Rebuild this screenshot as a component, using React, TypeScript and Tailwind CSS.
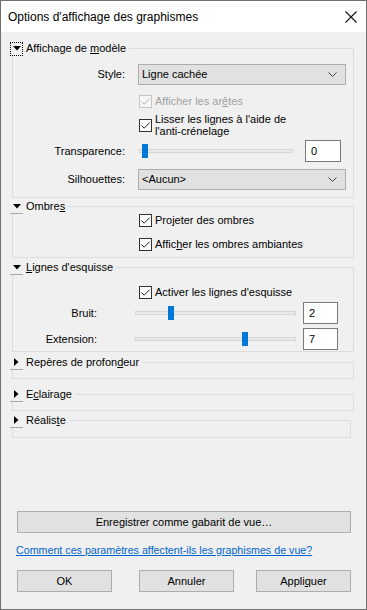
import type { ReactNode } from "react";

function Checkbox({ disabled }: { disabled?: boolean }) {
  return (
    <span
      className={
        disabled
          ? "flex h-[13px] w-[13px] shrink-0 items-center justify-center border border-[#c5c5c5] bg-[#f6f6f6]"
          : "flex h-[13px] w-[13px] shrink-0 items-center justify-center border border-[#333333] bg-white"
      }
    >
      <svg width="11" height="11" viewBox="0 0 11 11">
        <path
          d="M1.5 5.5 L4.2 8.2 L9.6 2.6"
          fill="none"
          stroke={disabled ? "#b4b4b4" : "#222222"}
          strokeWidth="1"
        />
      </svg>
    </span>
  );
}

function CheckRow({
  children,
  disabled,
  className,
}: {
  children: ReactNode;
  disabled?: boolean;
  className?: string;
}) {
  return (
    <div className={"flex items-center gap-[3px] pl-[126px] " + (className ?? "")}>
      <Checkbox disabled={disabled} />
      <span className={disabled ? "leading-[13px] text-[#a0a0a0]" : "leading-[13px]"}>{children}</span>
    </div>
  );
}

function Select({ value }: { value: string }) {
  return (
    <div className="flex h-[21px] w-[208px] items-center justify-between border border-[#adadad] bg-[#e1e1e1] pl-[3px] pr-[8px]">
      <span>{value}</span>
      <svg width="9" height="5" viewBox="0 0 9 5">
        <path d="M0.5 0.5 L4.5 4.5 L8.5 0.5" fill="none" stroke="#404040" strokeWidth="1" />
      </svg>
    </div>
  );
}

function Slider({ width, pos }: { width: number; pos: number }) {
  // pos: 0..1
  const left = 3 + pos * (width - 12);
  return (
    <div className="relative h-[22px] shrink-0" style={{ width }}>
      <div className="absolute left-0 right-0 top-[9px] h-[4px] border border-[#d6d6d6] bg-[#e7eaea]" />
      <div className="absolute top-[4px] h-[14px] w-[6px] bg-[#0078d7]" style={{ left }} />
    </div>
  );
}

function NumBox({ value, w }: { value: string; w: string }) {
  return (
    <div className={"flex h-[22px] items-center border border-[#7a7a7a] bg-white pl-[5px] " + w}>
      {value}
    </div>
  );
}

function Toggle({ open, focus }: { open: boolean; focus?: boolean }) {
  return (
    <div
      className={
        focus
          ? "flex h-[14px] w-[13px] items-center justify-center border border-dotted border-black"
          : "flex h-[14px] w-[13px] items-center justify-center border-b border-[#a8a8a8]"
      }
    >
      {open ? (
        <svg width="8" height="5" viewBox="0 0 8 5">
          <polygon points="0,0 8,0 4,4.5" fill="#000" />
        </svg>
      ) : (
        <svg width="5" height="8" viewBox="0 0 5 8">
          <polygon points="0,0 4.5,4 0,8" fill="#000" />
        </svg>
      )}
    </div>
  );
}

function Group({
  title,
  open,
  focus,
  className,
  children,
}: {
  title: ReactNode;
  open: boolean;
  focus?: boolean;
  className: string;
  children?: ReactNode;
}) {
  return (
    <div className={"ml-[11px] border border-[#dcdcdc] " + className}>
      <div className="-ml-[3px] -mt-[8px] flex h-[15px] w-fit items-center gap-[3px] bg-[#f0f0f0] pr-[3px]">
        <Toggle open={open} focus={focus} />
        <span className="leading-[15px]">{title}</span>
      </div>
      {children}
    </div>
  );
}

export default function App() {
  return (
    <div className="flex h-[610px] w-[367px] flex-col border border-[#6e6e6e] bg-[#f0f0f0] font-['Liberation_Sans',Arial,sans-serif] text-[11px] text-black">
      {/* Title bar */}
      <div className="flex h-[31px] shrink-0 items-center justify-between bg-white pl-[7px] pr-[9px]">
        <span className="text-[12px]">Options d'affichage des graphismes</span>
        <svg width="12" height="12" viewBox="0 0 12 12">
          <path d="M0.5 0.5 L11.5 11.5 M11.5 0.5 L0.5 11.5" stroke="#111" strokeWidth="1.1" />
        </svg>
      </div>

      {/* Affichage de modèle */}
      <Group
        title={
          <>
            Affichage de <u>m</u>odèle
          </>
        }
        open
        focus
        className="mt-[16px] w-[342px] pb-[7px]"
      >
        <div className="mt-[8px] flex h-[21px] items-center">
          <span className="w-[112px] text-right">Style:</span>
          <div className="ml-[13px]">
            <Select value="Ligne cachée" />
          </div>
        </div>
        <CheckRow disabled className="mt-[10px]">
          Afficher les ar<u>ê</u>tes
        </CheckRow>
        <CheckRow className="mt-[5px]">
          <span className="block leading-[12px]">
            Lisser les li<u>g</u>nes à l'aide de
            <br />
            l'anti-crénelage
          </span>
        </CheckRow>
        <div className="mt-[3px] flex h-[22px] items-center">
          <span className="w-[112px] text-right">Transparence:</span>
          <div className="ml-[14px]">
            <Slider width={154} pos={0} />
          </div>
          <div className="ml-[12px]">
            <NumBox value="0" w="w-[36px]" />
          </div>
        </div>
        <div className="mt-[7px] flex h-[21px] items-center">
          <span className="w-[112px] text-right">Silhouettes:</span>
          <div className="ml-[13px]">
            <Select value="<Aucun>" />
          </div>
        </div>
      </Group>

      {/* Ombres */}
      <Group
        title={
          <>
            Ombre<u>s</u>
          </>
        }
        open
        className="mt-[8px] w-[342px] pb-[6px]"
      >
        <CheckRow>
          Pro<u>j</u>eter des ombres
        </CheckRow>
        <CheckRow className="mt-[11px]">
          Affic<u>h</u>er les ombres ambiantes
        </CheckRow>
      </Group>

      {/* Lignes d'esquisse */}
      <Group
        title={
          <>
            <u>L</u>ignes d'esquisse
          </>
        }
        open
        className="mt-[9px] w-[342px] pb-[1px]"
      >
        <CheckRow className="mt-[11px]">
          Activer les li<u>g</u>nes d'esquisse
        </CheckRow>
        <div className="mt-[3px] flex h-[22px] items-center">
          <span className="w-[84px] text-right">Bruit:</span>
          <div className="ml-[38px]">
            <Slider width={161} pos={0.2} />
          </div>
          <div className="ml-[7px]">
            <NumBox value="2" w="w-[35px]" />
          </div>
        </div>
        <div className="mt-[4px] flex h-[22px] items-center">
          <span className="w-[84px] text-right">Extension:</span>
          <div className="ml-[38px]">
            <Slider width={161} pos={0.7} />
          </div>
          <div className="ml-[7px]">
            <NumBox value="7" w="w-[35px]" />
          </div>
        </div>
      </Group>

      <Group
        title={
          <>
            Repères de profon<u>d</u>eur
          </>
        }
        open={false}
        className="mt-[10px] w-[342px] pb-[8px]"
      />
      <Group
        title={
          <>
            E<u>c</u>lairage
          </>
        }
        open={false}
        className="mt-[15px] w-[342px] pb-[8px]"
      />
      <Group
        title={
          <>
            Réalis<u>t</u>e
          </>
        }
        open={false}
        className="mt-[9px] w-[339px] pb-[9px]"
      />

      <button className="ml-[16px] mt-[73px] flex h-[22px] w-[334px] items-center justify-center border border-[#adadad] bg-[#e1e1e1]">
        Enregistrer comme gabarit de vue…
      </button>

      <a className="ml-[15px] mt-[10px] block text-[10.7px] leading-[14px] text-[#0066cc] underline">
        Comment ces paramètres affectent-ils les graphismes de vue?
      </a>

      <div className="mt-[13px] flex">
        <button className="ml-[16px] flex h-[22px] w-[95px] items-center justify-center border border-[#adadad] bg-[#e1e1e1]">
          OK
        </button>
        <button className="ml-[27px] flex h-[22px] w-[95px] items-center justify-center border border-[#adadad] bg-[#e1e1e1]">
          Annuler
        </button>
        <button className="ml-[22px] flex h-[22px] w-[95px] items-center justify-center border border-[#adadad] bg-[#e1e1e1]">
          Appli<u>q</u>uer
        </button>
      </div>
    </div>
  );
}
